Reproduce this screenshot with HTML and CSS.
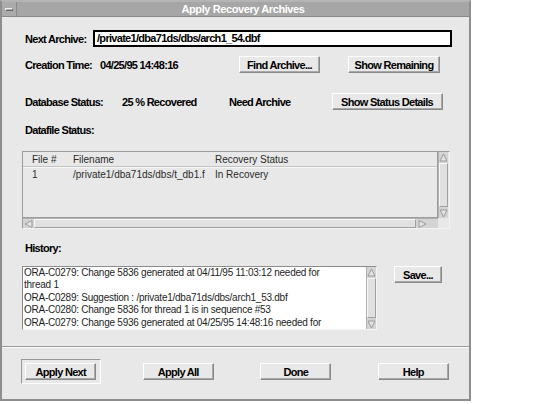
FILE: index.html
```html
<!DOCTYPE html>
<html>
<head>
<meta charset="utf-8">
<link rel="stylesheet" href="styles.css">
</head>
<body>
<div class="window">
  <div class="titlebar">
    <div class="menu-btn"><span class="dash"></span></div>
    <div class="title">Apply Recovery Archives</div>
  </div>
  <div class="main">
    <div class="row">
      <span class="label w-next">Next Archive:</span>
      <div class="input">/private1/dba71ds/dbs/arch1_54.dbf</div>
    </div>
    <div class="row row-creation">
      <span class="label w-creation">Creation Time:</span>
      <span class="label">04/25/95 14:48:16</span>
      <button class="btn btn-find">Find Archive...</button>
      <button class="btn btn-remaining">Show Remaining</button>
    </div>
    <div class="row row-db">
      <span class="label w-db">Database Status:</span>
      <span class="label w-pct">25 % Recovered</span>
      <span class="label">Need Archive</span>
      <button class="btn btn-details">Show Status Details</button>
    </div>
    <div class="section-label datafile-label">Datafile Status:</div>
    <div class="table">
      <div class="table-view">
        <div class="thead">
          <span class="c1">File #</span><span class="c2">Filename</span><span class="c3">Recovery Status</span>
        </div>
        <div class="trow">
          <span class="c1">1</span><span class="c2">/private1/dba71ds/dbs/t_db1.f</span><span class="c3">In Recovery</span>
        </div>
      </div>
      <div class="vscroll">
        <span class="arrow"><svg width="9" height="9" viewBox="0 0 9 9"><polygon points="4.5,1 8,8 1,8" fill="#e4e4e4" stroke="#9a9a9a"/></svg></span>
        <span class="vthumb"></span>
        <span class="arrow"><svg width="9" height="9" viewBox="0 0 9 9"><polygon points="1,1 8,1 4.5,8" fill="#e4e4e4" stroke="#9a9a9a"/></svg></span>
      </div>
      <div class="hscroll">
        <span class="arrow"><svg width="9" height="8" viewBox="0 0 9 8"><polygon points="1,4 8,0.5 8,7.5" fill="#e4e4e4" stroke="#9a9a9a"/></svg></span>
        <span class="hthumb"></span>
        <span class="arrow"><svg width="9" height="8" viewBox="0 0 9 8"><polygon points="1,0.5 8,4 1,7.5" fill="#e4e4e4" stroke="#9a9a9a"/></svg></span>
      </div>
      <div class="corner"></div>
    </div>
    <div class="section-label history-label">History:</div>
    <div class="history-row">
      <div class="history">
        <div class="history-text">
          <div>ORA-C0279: Change 5836 generated at 04/11/95 11:03:12 needed for</div>
          <div>thread 1</div>
          <div>ORA-C0289: Suggestion : /private1/dba71ds/dbs/arch1_53.dbf</div>
          <div>ORA-C0280: Change 5836 for thread 1 is in sequence #53</div>
          <div>ORA-C0279: Change 5936 generated at 04/25/95 14:48:16 needed for</div>
        </div>
        <div class="vscroll hist-scroll">
          <span class="arrow"><svg width="9" height="9" viewBox="0 0 9 9"><polygon points="4.5,1 8,8 1,8" fill="#e4e4e4" stroke="#9a9a9a"/></svg></span>
          <span class="vthumb"></span>
          <span class="arrow"><svg width="9" height="9" viewBox="0 0 9 9"><polygon points="1,1 8,1 4.5,8" fill="#e4e4e4" stroke="#9a9a9a"/></svg></span>
        </div>
      </div>
      <button class="btn btn-save">Save...</button>
    </div>
  </div>
  <div class="separator"></div>
  <div class="footer">
    <div class="default-frame"><button class="btn btn-foot">Apply Next</button></div>
    <button class="btn btn-foot">Apply All</button>
    <button class="btn btn-foot">Done</button>
    <button class="btn btn-foot">Help</button>
  </div>
</div>
</body>
</html>
```

FILE: styles.css
```css
* { box-sizing: border-box; }
html, body { margin: 0; padding: 0; background: #ffffff; }
body { font-family: "Liberation Sans", Arial, sans-serif; color: #000; }

.window {
  width: 471px;
  height: 401px;
  background: #e8e8e8;
  border: 2px solid #8e8e8e;
  border-top-color: #b4b4b4;
  display: flex;
  flex-direction: column;
}

.titlebar {
  height: 15px;
  display: flex;
  background: #a6a6a6;
  border-bottom: 1px solid #8a8a8a;
}
.menu-btn {
  width: 15px;
  border-right: 1px solid #8a8a8a;
  display: flex;
  align-items: center;
  justify-content: center;
  background: #ababab;
}
.menu-btn .dash {
  width: 8px;
  height: 3px;
  border: 1px solid;
  border-color: #f0f0f0 #6c6c6c #6c6c6c #f0f0f0;
}
.title {
  flex: 1;
  text-align: center;
  color: #fff;
  font-weight: bold;
  font-size: 11px;
  line-height: 14px;
  letter-spacing: -0.4px;
}

.main {
  padding: 13px 0 0 20px;
  display: flex;
  flex-direction: column;
}

.row {
  display: flex;
  align-items: center;
  height: 17px;
}
.row-creation { margin-top: 9px; }
.row-db { margin-top: 20px; }

.label, .section-label {
  font-size: 11px;
  font-weight: bold;
  letter-spacing: -0.7px;
  white-space: nowrap;
}
.label:first-child { padding-left: 3px; }
.w-next { width: 71px; }
.w-creation { width: 78px; }
.w-db { width: 100px; }
.w-pct { width: 107px; }

.input {
  width: 359px;
  height: 17px;
  border: 2px solid #000;
  background: #fff;
  font-size: 11px;
  font-weight: bold;
  letter-spacing: -0.7px;
  line-height: 13px;
  padding-left: 2px;
}

.btn {
  font-family: "Liberation Sans", Arial, sans-serif;
  font-size: 11px;
  font-weight: bold;
  letter-spacing: -0.7px;
  color: #000;
  height: 17px;
  padding: 0;
  margin: 0;
  background: #e8e8e8;
  border: 1px solid;
  border-color: #ffffff #8a8a8a #8a8a8a #ffffff;
  box-shadow: inset -1px -1px 0 #a8a8a8;
  line-height: 14px;
  white-space: nowrap;
}
.btn-find { width: 81px; margin-left: 61px; }
.btn-remaining { width: 92px; margin-left: 28px; }
.btn-details { width: 111px; margin-left: 41px; }
.btn-save { width: 48px; margin-left: 17px; }
.btn-foot { width: 71px; }

.section-label { line-height: 13px; padding-left: 3px; }
.datafile-label { margin-top: 14px; }
.history-label { margin-top: 13px; }

.table {
  margin-top: 14px;
  width: 428px;
  height: 78px;
  border: 1px solid;
  border-color: #9c9c9c #f4f4f4 #f4f4f4 #9c9c9c;
  display: grid;
  grid-template-columns: 415px 10px;
  grid-template-rows: 66px 10px;
}
.table-view {
  border-right: 1px solid #9c9c9c;
  border-bottom: 1px solid #9c9c9c;
  font-size: 10px;
  color: #2a2a2a;
}
.thead, .trow {
  display: flex;
  height: 15px;
  align-items: center;
  white-space: nowrap;
}
.thead { border-bottom: 1px solid #c4c4c4; box-shadow: 0 1px 0 #f6f6f6; }
.c1 { width: 50px; padding-left: 9px; }
.c2 { width: 142px; }

.vscroll {
  display: flex;
  flex-direction: column;
  background: #d4d4d4;
  border-left: 1px solid #b0b0b0;
}
.vscroll .arrow {
  height: 10px;
  display: flex;
  align-items: center;
  justify-content: center;
}
.vthumb {
  flex: 1;
  margin: 1px 0;
  background: #e0e0e0;
  border: 1px solid;
  border-color: #f8f8f8 #a0a0a0 #a0a0a0 #f8f8f8;
}
.hscroll {
  display: flex;
  background: #d4d4d4;
  border-top: 1px solid #b0b0b0;
}
.hscroll .arrow {
  width: 10px;
  display: flex;
  align-items: center;
  justify-content: center;
}
.hthumb {
  width: 382px;
  margin: 0 1px;
  background: #e0e0e0;
  border: 1px solid;
  border-color: #f8f8f8 #a0a0a0 #a0a0a0 #f8f8f8;
}
.corner { background: #e8e8e8; }

.history-row {
  margin-top: 11px;
  display: flex;
  align-items: flex-start;
}
.history {
  width: 355px;
  height: 64px;
  display: flex;
  border: 1px solid;
  border-color: #8c8c8c #f4f4f4 #f4f4f4 #8c8c8c;
}
.history-text {
  flex: 1;
  background: #fff;
  font-size: 10px;
  line-height: 12.4px;
  letter-spacing: -0.25px;
  color: #1e1e1e;
  padding: 0 0 0 1px;
  white-space: nowrap;
  overflow: hidden;
}
.hist-scroll { width: 10px; }

.separator {
  margin-top: 16px;
  height: 2px;
  border-top: 1px solid #9a9a9a;
  border-bottom: 1px solid #fafafa;
}

.footer {
  padding-top: 11px;
  display: grid;
  grid-template-columns: repeat(4, 117.5px);
  justify-items: center;
  align-items: center;
}
.default-frame {
  width: 80px;
  height: 25px;
  border: 1px solid;
  border-color: #9a9a9a #ffffff #ffffff #9a9a9a;
  display: flex;
  align-items: center;
  justify-content: center;
}
```
